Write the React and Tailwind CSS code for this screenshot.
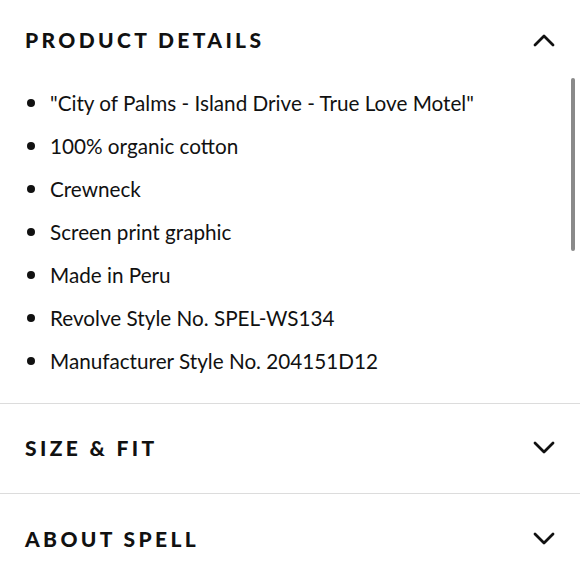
import React from "react";

const details = [
	'"City of Palms - Island Drive - True Love Motel"',
	"100% organic cotton",
	"Crewneck",
	"Screen print graphic",
	"Made in Peru",
	"Revolve Style No. SPEL-WS134",
	"Manufacturer Style No. 204151D12",
];

const Chevron = ({ up }) => (
	<svg width="22" height="14" viewBox="0 0 22 14" fill="none">
		<path
			d={up ? "M2 12 L11 3 L20 12" : "M2 2 L11 11 L20 2"}
			stroke="#111"
			strokeWidth="2.8"
			strokeLinecap="round"
			strokeLinejoin="round"
		/>
	</svg>
);

const SectionHeader = ({ title, up }) => (
	<div className="flex items-center justify-between pl-[25px] pr-[25px]">
		<h2 className="text-[21px] font-black tracking-[0.16em] text-[#111]">{title}</h2>
		<Chevron up={up} />
	</div>
);

export default function App() {
	return (
		<div
			className="relative w-[580px] h-[580px] overflow-hidden bg-white text-[#111]"
			style={{ fontFamily: "Lato, 'Open Sans', sans-serif" }}
		>
			<div className="pt-[24px] pb-[30px] border-b border-[#dcdcdc]">
				<SectionHeader title="PRODUCT DETAILS" up />
				<ul className="mt-[35px] pl-[25px] flex flex-col gap-[19px]">
					{details.map((d) => (
						<li key={d} className="flex items-center h-[24px] text-[20.7px] leading-[24px]">
							<span className="w-[8px] h-[8px] rounded-full bg-[#111] ml-[2px] mr-[15px]" />
							{d}
						</li>
					))}
				</ul>
			</div>
			<div className="h-[90px] flex flex-col justify-center border-b border-[#dcdcdc]">
				<SectionHeader title="SIZE & FIT" />
			</div>
			<div className="h-[90px] flex flex-col justify-center">
				<SectionHeader title="ABOUT SPELL" />
			</div>
			<div className="absolute right-[5px] top-[78px] w-[4px] h-[173px] rounded-full bg-[#8a8a8a]" />
		</div>
	);
}
